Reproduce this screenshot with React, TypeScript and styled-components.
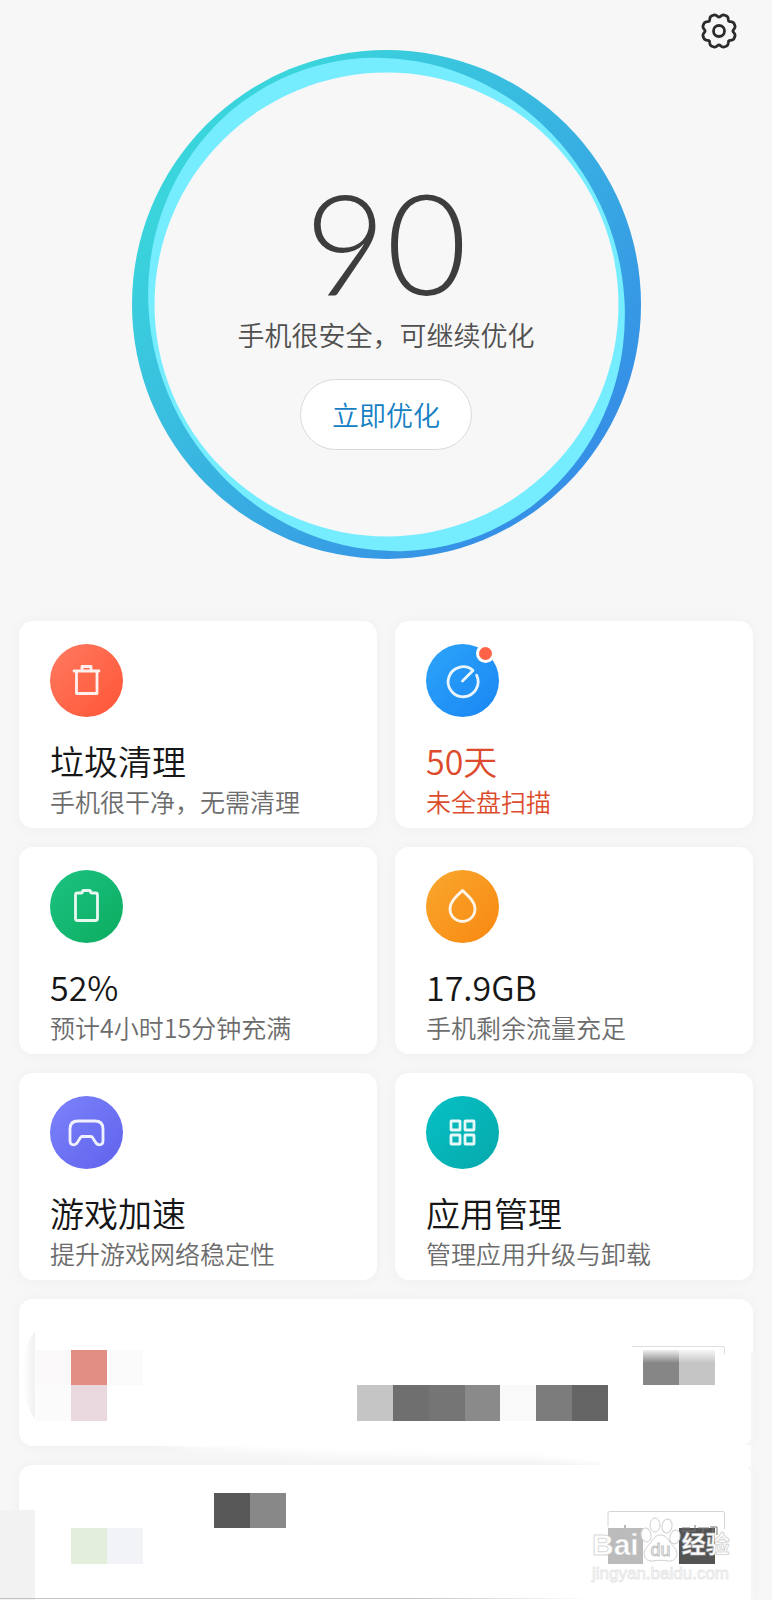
import React from 'react';
import styled, { createGlobalStyle } from 'styled-components';

const GlobalStyle = createGlobalStyle`
  *, *::before, *::after { box-sizing: border-box; }
  body {
    margin: 0;
    background: #f7f7f7;
    color: #161616;
    font-family: "Noto Sans CJK SC", "Noto Sans", sans-serif;
    font-weight: 350;
  }
  button { font: inherit; color: inherit; border: 0; padding: 0; cursor: pointer; }
  h2, p { margin: 0; font-weight: inherit; }
`;

const Page = styled.div`
  min-height: 100vh;
  overflow: hidden;
`;

const TopBar = styled.header`
  display: flex;
  justify-content: flex-end;
  padding: 12px 34px 0;
  height: 50px;
`;

const SettingsButton = styled.button`
  width: 38px;
  height: 38px;
  background: none;
`;

const Gauge = styled.section`
  position: relative;
  display: flex;
  flex-direction: column;
  align-items: center;
  width: 509px;
  height: 509px;
  margin: 0 auto;
  padding-top: 131px;
`;

const Ring = styled.svg`
  position: absolute;
  inset: 0;
  width: 100%;
  height: 100%;
`;

const Score = styled.div`
  position: relative;
  font-family: Lato, "Open Sans", sans-serif;
  font-size: 140px;
  line-height: 120px;
  font-weight: 300;
  color: #3d3d3d;
`;

const Status = styled.p`
  position: relative;
  margin-top: 16px;
  font-size: 27px;
  line-height: 36px;
  color: #505050;
`;

const OptimizeButton = styled.button`
  position: relative;
  margin-top: 26px;
  width: 172px;
  height: 71px;
  border: 1px solid #dadada;
  border-radius: 36px;
  background: #fff;
  font-size: 27px;
  color: #1480c4;
`;

const Main = styled.main`
  padding: 62px 19px 0;
`;

const CardGrid = styled.div`
  display: grid;
  grid-template-columns: 1fr 1fr;
  gap: 19px 18px;
`;

const Card = styled.button`
  display: flex;
  flex-direction: column;
  align-items: flex-start;
  padding: 23px 31px 10px;
  border-radius: 14px;
  background: #fff;
  box-shadow: 0 1px 14px rgba(0, 0, 0, 0.04);
  text-align: left;
`;

const IconDisc = styled.span<{ $from: string; $to: string }>`
  position: relative;
  width: 73px;
  height: 73px;
  margin-bottom: 21px;
  border-radius: 50%;
  background: linear-gradient(135deg, ${(p) => p.$from}, ${(p) => p.$to});
  svg { display: block; }
`;

const AlertDot = styled.span`
  position: absolute;
  top: 0;
  right: 4px;
  width: 19px;
  height: 19px;
  border: 3px solid #fff;
  border-radius: 50%;
  background: #ff6347;
`;

const CardTitle = styled.span<{ $alert?: boolean }>`
  font-size: 34px;
  line-height: 46px;
  color: ${(p) => (p.$alert ? '#dc4c2c' : '#161616')};
`;

const CardNote = styled.span<{ $alert?: boolean }>`
  font-size: 25px;
  line-height: 34px;
  color: ${(p) => (p.$alert ? '#dc4c2c' : '#6c6c6c')};
`;

const Feed = styled.section`
  position: relative;
  display: flex;
  flex-direction: column;
  gap: 19px;
  padding: 19px 19px 0;
`;

const FeedCard = styled.div<{ $last?: boolean }>`
  height: ${(p) => (p.$last ? 135 : 147)}px;
  border-radius: ${(p) => (p.$last ? '14px 14px 0 0' : '14px')};
  background: #fff;
  box-shadow: 0 1px 14px rgba(0, 0, 0, 0.04);
`;

const Mosaic = styled.svg`
  position: absolute;
  top: 19px;
  left: 0;
  width: 100%;
  height: auto;
`;

const Watermark = styled.div`
  position: absolute;
  right: 40px;
  bottom: 15px;
  width: 140px;
  color: #fff;
`;

const Brand = styled.div`
  display: flex;
  align-items: flex-end;
  height: 50px;
`;

const BrandText = styled.span<{ $cjk?: boolean }>`
  font-family: "Liberation Sans", "Noto Sans CJK SC", sans-serif;
  font-size: ${(p) => (p.$cjk ? 24 : 30)}px;
  line-height: 36px;
  font-weight: 700;
  -webkit-text-stroke: 1px rgba(190, 190, 190, 0.6);
`;

const Paw = styled.svg`
  width: 43px;
  height: 50px;
`;

const Site = styled.div`
  font-family: "Liberation Sans", sans-serif;
  font-size: 17px;
  line-height: 22px;
  font-weight: 400;
  -webkit-text-stroke: 1px rgba(215, 215, 215, 0.6);
`;

/* Gear outline with eight rounded teeth around a centre of 19,19. */
const gearPath = (() => {
  const points: string[] = [];
  for (let i = 0; i < 160; i += 1) {
    const a = (i / 160) * Math.PI * 2;
    const notch = Math.pow((1 + Math.cos(8 * a)) / 2, 2);
    const r = 16.8 - 2.9 * notch;
    points.push(`${(19 + r * Math.sin(a)).toFixed(2)} ${(19 - r * Math.cos(a)).toFixed(2)}`);
  }
  return `M${points.join('L')}Z`;
})();

const Glyph = ({ children }: { children: React.ReactNode }) => (
  <svg width="73" height="73" viewBox="0 0 73 73" fill="none" stroke="#fff" strokeOpacity="0.9"
    strokeWidth="2.8" strokeLinejoin="round" strokeLinecap="round" aria-hidden="true">
    {children}
  </svg>
);

const features = [
  {
    title: '垃圾清理', note: '手机很干净，无需清理', from: '#ff7a61', to: '#ff5535',
    glyph: <path d="M24 27H49M32 26.500V22.500H41V26.500M26.500 27.500V49.500H47V27.500" />,
  },
  {
    title: '50天', note: '未全盘扫描', from: '#2ca4fa', to: '#1a86f3', alert: true,
    glyph: <path d="M36.500 37L47 26.500A15 15 0 1 0 50.600 31.200" />,
  },
  {
    title: '52%', note: '预计4小时15分钟充满', from: '#1cc382', to: '#0cac60',
    glyph: <path d="M27.500 23H31Q32.500 23 32.500 21.500Q32.500 20.500 34 20.500H39Q40.500 20.500 40.500 21.500Q40.500 23 42 23H45.500Q47.500 23 47.500 25V48.500Q47.500 50.500 45.500 50.500H27.500Q25.500 50.500 25.500 48.500V25Q25.500 23 27.500 23Z" />,
  },
  {
    title: '17.9GB', note: '手机剩余流量充足', from: '#f9a72e', to: '#f88810',
    glyph: <path d="M36.500 20.500C30 26.500 24 32 24 39A12.500 12.500 0 0 0 49 39C49 32 43 26.500 36.500 20.500Z" />,
  },
  {
    title: '游戏加速', note: '提升游戏网络稳定性', from: '#7d82fb', to: '#5e63ec',
    glyph: <path d="M28 25H45Q53 25 53 33V44.500Q53 48.800 49.500 48.800Q47 48.800 45.500 46.300L42.500 41.500Q42 40.500 41 40.500H32Q31 40.500 30.500 41.500L27.500 46.300Q26 48.800 23.500 48.800Q20 48.800 20 44.500V33Q20 25 28 25Z" />,
  },
  {
    title: '应用管理', note: '管理应用升级与卸载', from: '#06c1c5', to: '#06a8ab',
    glyph: (
      <>
        {[[25, 25], [39, 25], [25, 39], [39, 39]].map(([x, y]) => (
          <rect key={`${x}-${y}`} x={x} y={y} width="9" height="9" rx="0.500" />
        ))}
      </>
    ),
  },
];

/* Pixelated blocks over the private rows: column, row, colour. */
const CELL = 35.75;
const blocks: Array<[number, number, string]> = [
  [0, 0, '#fbf8f9'], [1, 0, '#e28e84'], [2, 0, '#fbfbfb'],
  [0, 1, '#fbfbfb'], [1, 1, '#e9d9df'],
  [9, 1, '#c5c5c5'], [10, 1, '#6f6f6f'], [11, 1, '#757575'], [12, 1, '#8a8a8a'],
  [13, 1, '#f9f9f9'], [14, 1, '#7c7c7c'], [15, 1, '#656565'],
  [17, 0, '#868686'], [18, 0, '#c5c5c5'],
  [5, 4, '#585858'], [6, 4, '#888888'],
  [1, 5, '#e3eedb'], [2, 5, '#f2f3f6'], [16, 5, '#bbbbbb'], [18, 5, '#545454'],
];

export default function App() {
  return (
    <Page>
      <GlobalStyle />
      <TopBar>
        <SettingsButton aria-label="设置">
          <svg width="38" height="38" viewBox="0 0 38 38" fill="none" stroke="#2b2b2b" strokeWidth="2.800" strokeLinejoin="round">
            <path d={gearPath} />
            <circle cx="19" cy="19" r="5.500" />
          </svg>
        </SettingsButton>
      </TopBar>

      <Gauge>
        <Ring viewBox="0 0 509 509" aria-hidden="true">
          <defs>
            <linearGradient id="ring" gradientUnits="userSpaceOnUse" x1="90" y1="90" x2="420" y2="420">
              <stop offset="0" stopColor="#3ad5dc" />
              <stop offset="1" stopColor="#3690e6" />
            </linearGradient>
          </defs>
          <circle cx="254.500" cy="254.500" r="254.500" fill="url(#ring)" />
          <ellipse cx="254.500" cy="254.500" rx="236" ry="249" fill="#75edff" transform="rotate(-25 254.500 254.500)" />
          <circle cx="254.500" cy="254.500" r="232" fill="#f7f7f7" />
        </Ring>
        <Score>90</Score>
        <Status>手机很安全，可继续优化</Status>
        <OptimizeButton>立即优化</OptimizeButton>
      </Gauge>

      <Main>
        <CardGrid>
          {features.map((f) => (
            <Card key={f.title}>
              <IconDisc $from={f.from} $to={f.to}>
                <Glyph>{f.glyph}</Glyph>
                {f.alert && <AlertDot />}
              </IconDisc>
              <CardTitle $alert={f.alert}>{f.title}</CardTitle>
              <CardNote $alert={f.alert}>{f.note}</CardNote>
            </Card>
          ))}
        </CardGrid>
      </Main>

      <Feed>
        <FeedCard />
        <FeedCard $last />
        <Mosaic viewBox="0 0 772 301" aria-hidden="true">
          <defs>
            <filter id="soft" x="-20%" y="-60%" width="140%" height="220%"><feGaussianBlur stdDeviation="3" /></filter>
            <linearGradient id="fade" x1="0" y1="0" x2="0" y2="1">
              <stop offset="0" stopColor="#fff" />
              <stop offset="0.300" stopColor="#fff" stopOpacity="0.700" />
              <stop offset="1" stopColor="#fff" stopOpacity="0" />
            </linearGradient>
            <linearGradient id="edge" x1="0" y1="0" x2="1" y2="0">
              <stop offset="0" stopColor="#f0f0f0" stopOpacity="0" />
              <stop offset="1" stopColor="#f0f0f0" />
            </linearGradient>
            <linearGradient id="foot" x1="0" y1="0" x2="1" y2="0">
              <stop offset="0" stopColor="#c4c4c4" />
              <stop offset="0.700" stopColor="#c4c4c4" />
              <stop offset="1" stopColor="#c4c4c4" stopOpacity="0" />
            </linearGradient>
          </defs>
          <path d="M140 140L190 149L350 156L530 158L600 166L700 172H746V140Z" fill="#fff" filter="url(#soft)" />
          <rect x="600" y="146" width="151" height="22" fill="#fff" />
          <path d="M751 54H754V300H751Z" fill="#f6f6f6" />
          <path d="M35 32Q22 50 23 76Q24 108 35 120Z" fill="url(#edge)" />
          <rect x="0" y="211" width="35" height="90" fill="#f2f2f2" />
          {blocks.map(([col, row, color]) => (
            <rect key={`${col}-${row}`} x={35.5 + col * CELL} y={50.5 + row * CELL} width={CELL} height={CELL}
              fill={color} shapeRendering="crispEdges" />
          ))}
          <rect x="640" y="49" width="78" height="15" fill="url(#fade)" />
          <path d="M632 47.500H723Q724.500 47.500 724.500 49V55" fill="none" stroke="#dedede" />
          <path d="M608 228V214Q608 212.500 610 212.500H722Q724.500 212.500 724.500 214V230" fill="none" stroke="#d4d4d4" />
          <path d="M625 226V229M682 229H690M682 232H695V226M698 229H709M703 229V236M710 228H717V236M713 228V235" fill="none" stroke="#777" />
          <rect x="0" y="299" width="590" height="1" fill="url(#foot)" />
        </Mosaic>
        <Watermark>
          <Brand>
            <BrandText>Bai</BrandText>
            <Paw viewBox="0 0 43 50" fill="#fff" fillOpacity="0.900" stroke="#cfcfcf" strokeWidth="1">
              <ellipse cx="7" cy="22" rx="5" ry="7" transform="rotate(-12 7 22)" />
              <ellipse cx="16" cy="12" rx="5" ry="7" />
              <ellipse cx="28" cy="13" rx="5" ry="7" transform="rotate(8 28 13)" />
              <ellipse cx="36" cy="24" rx="5" ry="7" transform="rotate(14 36 24)" />
              <path d="M21.500 22C28 22 30 29 34 33C41 39 38 49 29 48C24 47 19 47 14 48C5 49 2 39 9 33C13 29 15 22 21.500 22Z" />
              <text x="21.500" y="43" textAnchor="middle" fontFamily="Liberation Sans, sans-serif" fontSize="18" stroke="#c4c4c4">du</text>
            </Paw>
            <BrandText $cjk>经验</BrandText>
          </Brand>
          <Site>jingyan.baidu.com</Site>
        </Watermark>
      </Feed>
    </Page>
  );
}
